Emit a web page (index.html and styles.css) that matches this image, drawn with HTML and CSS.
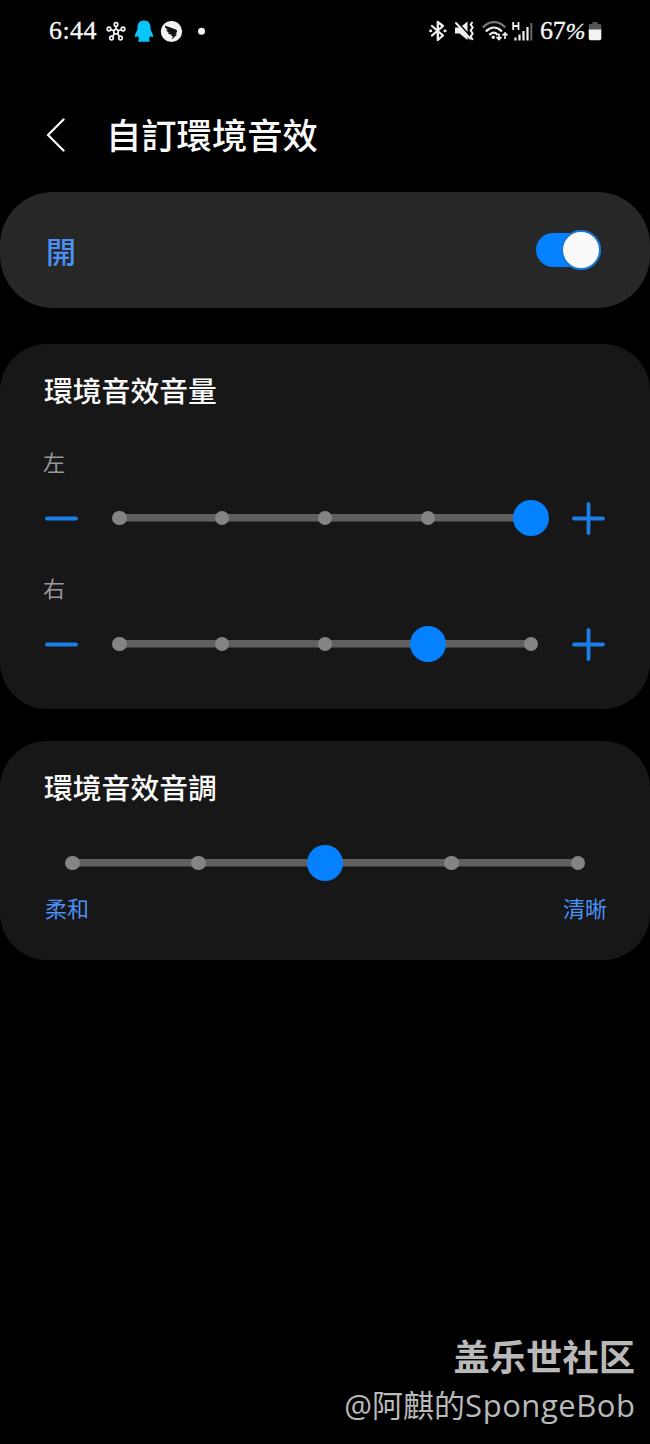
FILE: index.html
```html
<!DOCTYPE html>
<html lang="zh-Hant">
<head>
<meta charset="utf-8">
<title>自訂環境音效</title>
<link rel="stylesheet" href="styles.css">
</head>
<body>
<div class="screen">
  <header class="status">
    <span class="clock">6:44</span>
    <svg class="status-left" width="104" height="24" viewBox="106 18 104 24">
      <g fill="none" stroke="#f2f2f2" stroke-width="1.700">
        <circle cx="116" cy="30.700" r="2.300"/>
        <circle cx="116" cy="23.500" r="1.800"/><circle cx="109" cy="28" r="1.800"/><circle cx="123" cy="28" r="1.800"/><circle cx="111.500" cy="37" r="1.800"/><circle cx="120.500" cy="37" r="1.800"/>
        <path d="M116 25.500v3M111 28.700l2.700 1M121 28.700l-2.700 1M112.600 35.500l2-3M119.400 35.500l-2-3"/>
      </g>
      <path fill="#08c5f8" d="M144 19.500c-4.600 0-6.600 3.200-6.600 7.200v2.300c-1.300 2-2.700 4.800-2.400 6.600.3 1.400 1.400.6 2.600-.8.300 1.200 1 2.200 1.900 3-1.200.5-1.500 1.300-1 2.900h11c.5-1.600.2-2.400-1-2.900.9-.8 1.600-1.800 1.900-3 1.200 1.400 2.300 2.200 2.600.8.300-1.800-1.100-4.600-2.400-6.600v-2.300c0-4-2-7.200-6.600-7.200z"/>
      <circle cx="171.500" cy="30.500" r="10.600" fill="#f2f2f2"/>
      <path fill="#111" d="M164.800 24.600l10.300 3.600c1.700.6 2.300 1.500 1.800 2.700l-1.300 2.400 1.500.2-5.300 5 1-3.500-1.900-.2.700-1.400c-2 .1-3.200-.5-3.900-1.700l2 .1c-2-.6-3.200-1.600-3.500-3l2.400.6c-2-.9-3.500-2.300-3.800-4.800z"/>
      <circle cx="201.500" cy="30.200" r="3.500" fill="#f2f2f2"/>
    </svg>
    <svg class="status-right" width="106" height="26" viewBox="428 17 106 26">
      <g fill="none" stroke="#efefef" stroke-width="2.300" stroke-linejoin="round" stroke-linecap="round">
        <path d="M432 25l11 9.500-5.200 4.500V21l5.200 4-11 9.500"/>
        <path d="M430.500 29.900h.3M444.900 29.900h.3" stroke-width="2.800"/>
      </g>
      <path fill="#efefef" d="M455 26.500h5l7.500-6v18.500l-8-6.500H455z"/>
      <path d="M457 20.500l15.500 17" stroke="#000" stroke-width="1.600"/>
      <path d="M456 22l14 15.500" stroke="#efefef" stroke-width="2" stroke-linecap="round"/>
      <path d="M472.500 21l-1.800 2.500 2 3-2 3 2 3-2 3 2 3.500" stroke="#efefef" stroke-width="2" fill="none"/>
      <g fill="none" stroke-width="2.300" stroke-linecap="round">
        <path d="M483.500 25.800c6.500-6.200 15-6.200 21 0" stroke="#777"/>
        <path d="M486.500 29.800c4.700-4.300 10.300-4.300 14.800 0M490 33.300c2.800-2.300 5.200-2.300 7 0" stroke="#efefef"/>
      </g>
      <circle cx="493.300" cy="36.300" r="1.700" fill="#efefef"/>
      <path d="M499 32.500v6M496.500 36l2.500 2.500 2.500-2.500M505 38v-6M502.500 34.500l2.500-2.500 2.500 2.500" fill="none" stroke="#efefef" stroke-width="1.700"/>
      <path d="M513.200 21v8M518.500 21v8M513.200 25h5.300" stroke="#efefef" stroke-width="1.800"/>
      <path d="M515.500 36.500v3M519.500 33.500v6M523.500 30v9.500M527.500 26v13.500" stroke="#efefef" stroke-width="2.200"/>
      <path d="M531.300 22v17.500" stroke="#666" stroke-width="2"/>
    </svg>
    <span class="percent">67<i>%</i></span>
    <svg class="battery" width="14" height="20" viewBox="0 0 14 20">
      <path d="M4.500 1h5v2H12q1.300 0 1.300 1.300V10H.7V4.300Q.7 3 2 3h2.500z" fill="#555"/>
      <path d="M.7 8.500h12.600v9q0 1.800-1.800 1.800h-9Q.7 19.300.7 17.500z" fill="#f2f2f2"/>
    </svg>
  </header>

  <div class="title-bar">
    <svg class="back" width="20" height="34" viewBox="0 0 20 34"><path d="M17.500 1.500L2 17l15.500 15.500" fill="none" stroke="#f5f5f5" stroke-width="2.300" stroke-linecap="round" stroke-linejoin="round"/></svg>
    <h1>自訂環境音效</h1>
  </div>

  <section class="card master">
    <span class="on-label">開</span>
    <span class="switch"><span class="knob"></span></span>
  </section>

  <section class="card volume">
    <h2>環境音效音量</h2>
    <div class="side">左</div>
    <div class="row">
      <svg class="step" viewBox="0 0 33 33"><path d="M2 16.500h29"/></svg>
      <div class="slider"><i></i><i></i><i></i><i></i><i class="thumb"></i></div>
      <svg class="step" viewBox="0 0 33 33"><path d="M2 16.500h29M16.500 2v29"/></svg>
    </div>
    <div class="side second">右</div>
    <div class="row">
      <svg class="step" viewBox="0 0 33 33"><path d="M2 16.500h29"/></svg>
      <div class="slider"><i></i><i></i><i></i><i class="thumb"></i><i></i></div>
      <svg class="step" viewBox="0 0 33 33"><path d="M2 16.500h29M16.500 2v29"/></svg>
    </div>
  </section>

  <section class="card tone">
    <h2>環境音效音調</h2>
    <div class="slider"><i></i><i></i><i class="thumb"></i><i></i><i></i></div>
    <div class="ends"><span>柔和</span><span>清晰</span></div>
  </section>

  <footer class="watermark">
    <div class="community">盖乐世社区</div>
    <div class="author"><span class="latin">@</span><span>阿麒的</span><span class="latin">SpongeBob</span></div>
  </footer>
</div>
</body>
</html>
```
FILE: styles.css
```css
* { box-sizing: border-box; }
body { margin: 0; background: #000; }
.screen {
  width: 650px;
  height: 1444px;
  display: flex;
  flex-direction: column;
  background: #000;
  color: #fafafa;
  font-family: "KaiTi", "BiauKai", "Noto Sans CJK TC", sans-serif;
}
.status {
  height: 62px;
  padding: 0 48px 0 49px;
  display: flex;
  align-items: center;
  font-family: "Liberation Serif", serif;
  font-size: 26px;
  line-height: 30px;
  -webkit-text-stroke: 0.3px #fafafa;
}
.status svg { flex: none; -webkit-text-stroke: 0; }
.clock { width: 57px; letter-spacing: 0.4px; }
.status-right { margin-left: auto; }
.percent { width: 54px; padding-left: 6px; letter-spacing: -0.3px; white-space: nowrap; }
.percent i { font-size: 24px; }

.title-bar {
  height: 130px;
  padding: 8px 0 0 46px;
  display: flex;
  align-items: center;
  gap: 40px;
}
.back { flex: none; margin-top: 8px; }
h1 { margin: 5px 0 0; font-size: 35.3px; line-height: 50px; font-weight: 500; }

.card { flex: none; background: #171717; border-radius: 47px; }
.master {
  height: 116px;
  padding: 0 49px 0 46px;
  display: flex;
  align-items: center;
  justify-content: space-between;
  background: #272727;
  border-radius: 53px;
}
.on-label { font-size: 30px; font-weight: 500; color: #4a90f5; }
.switch {
  width: 65px;
  height: 34px;
  display: flex;
  align-items: center;
  justify-content: flex-end;
  border-radius: 17px;
  background: #0381fe;
}
.knob {
  flex: none;
  width: 40px;
  height: 40px;
  border: 2px solid #1579d8;
  border-radius: 50%;
  background: #fafafa;
}
.volume { height: 365px; margin-top: 36px; padding: 26px 45px 0; }
h2 { margin: 0 0 0 -1px; font-size: 28.8px; line-height: 40px; font-weight: 500; }
.side { margin: 36px 0 24px -2px; font-size: 22px; line-height: 30px; color: #999; }
.side.second { margin-top: 36px; }
.row { height: 36px; display: flex; align-items: center; gap: 34px; }
.step { flex: none; width: 33px; height: 33px; fill: none; stroke: #1a7fe8; stroke-width: 3.8; stroke-linecap: round; }
.slider {
  flex: 1;
  height: 36px;
  display: flex;
  align-items: center;
  justify-content: space-between;
  background: linear-gradient(#606060, #606060) center / calc(100% - 14px) 7.5px no-repeat;
}
.slider i { flex: none; width: 14.5px; height: 14.5px; border-radius: 50%; background: #848484; }
.slider .thumb { width: 36px; height: 36px; margin: -1px -10.75px 0; background: #0381fe; }
.tone { height: 219px; margin-top: 32px; padding: 26px 45px 0; }
.tone .slider { margin: 38px 20px 0; }
.ends { display: flex; justify-content: space-between; margin: 11px -2px 0 0; font-size: 22px; line-height: 30px; color: #4a90f5; }

.watermark {
  margin-top: auto;
  padding: 0 15px 15px 0;
  text-align: right;
  color: #b9b9b9;
  font-family: "Noto Sans CJK SC", sans-serif;
}
.community { font-size: 36.3px; font-weight: 700; line-height: 49px; }
.author { display: flex; justify-content: flex-end; align-items: baseline; font-size: 31px; line-height: 48px; font-weight: 400; }
.latin { font-family: "Open Sans", "Noto Sans", sans-serif; letter-spacing: 0.55px; margin-right: -0.55px; }
```
